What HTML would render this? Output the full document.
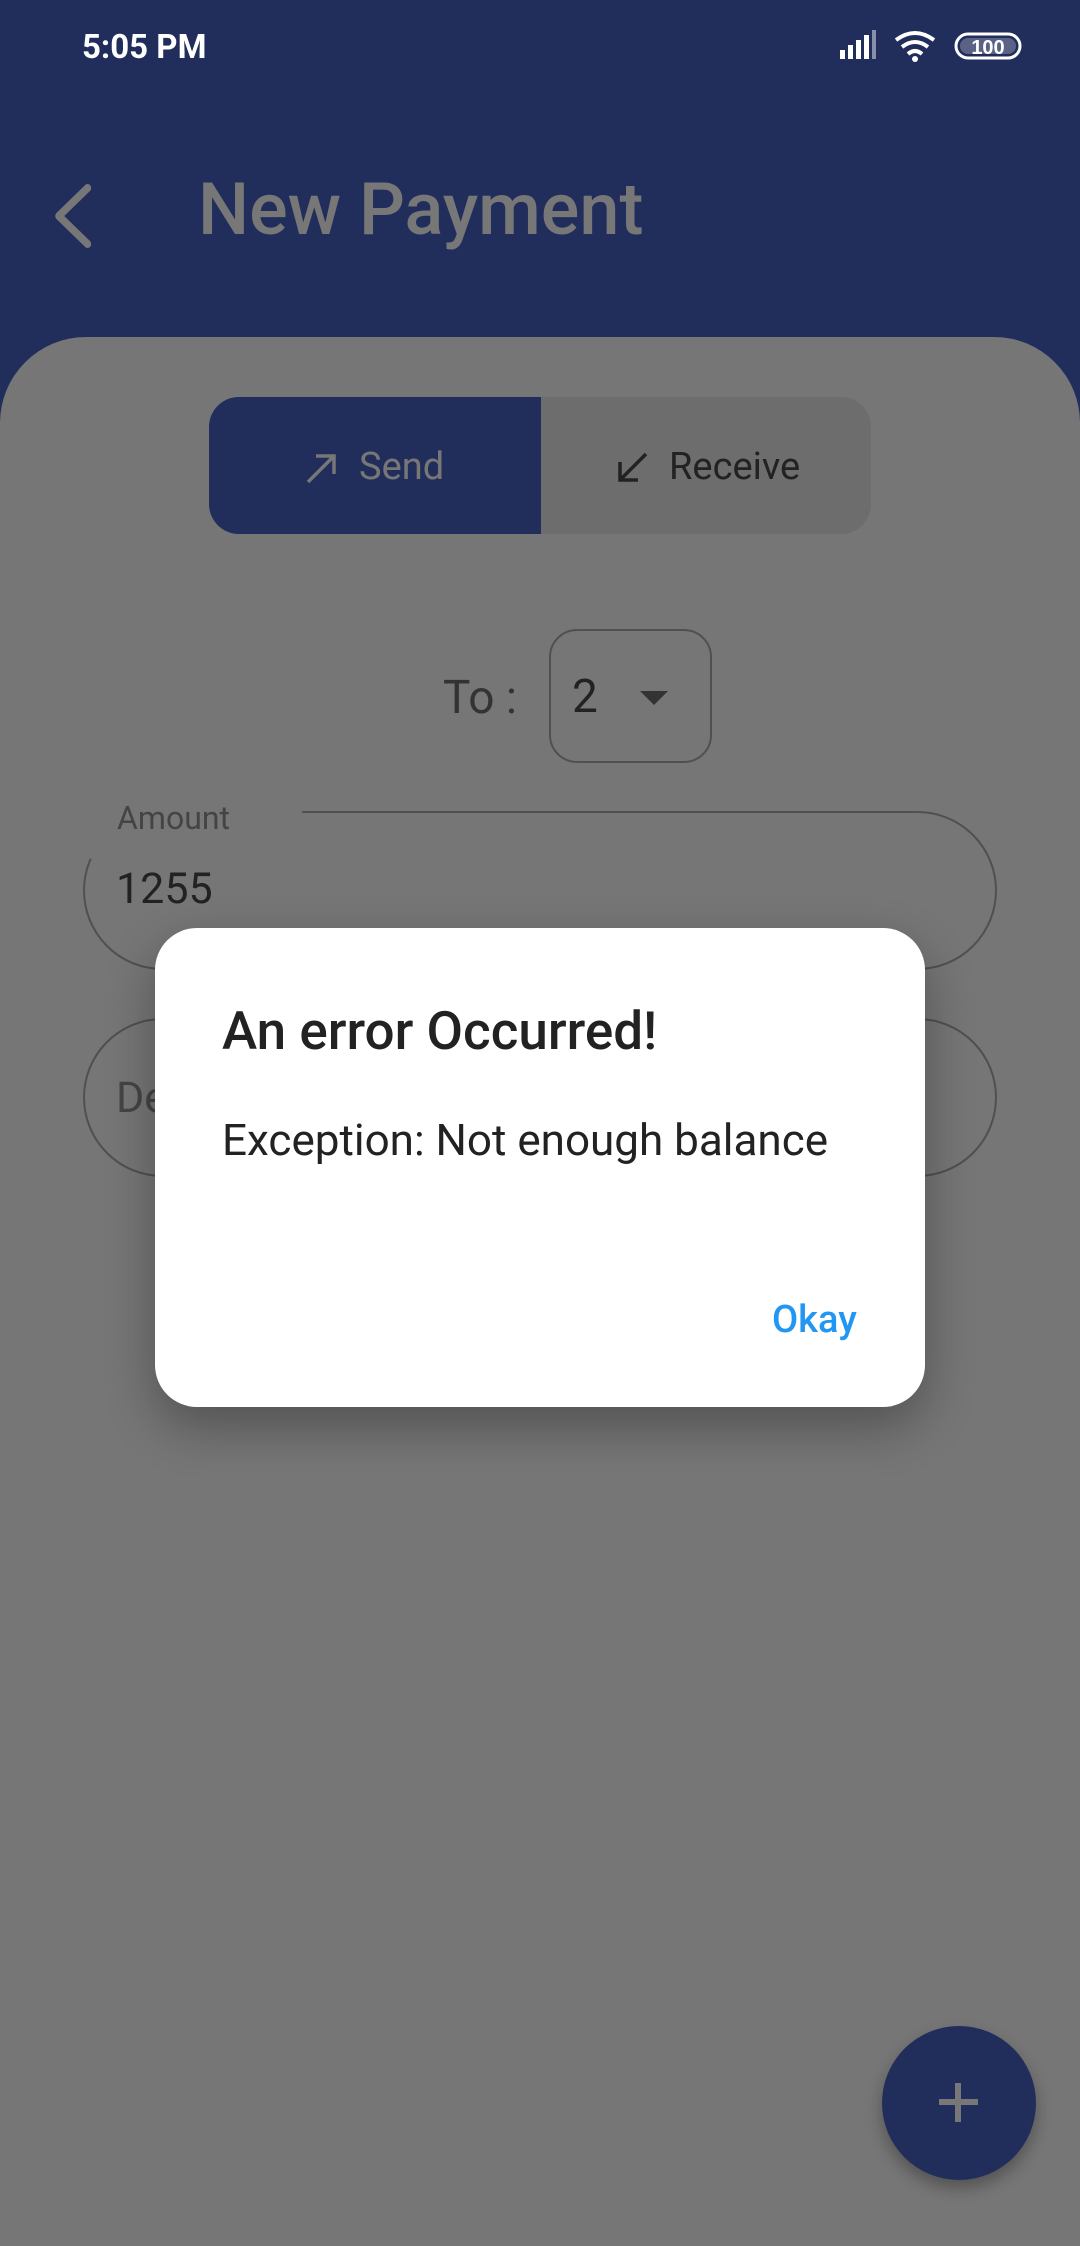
<!DOCTYPE html>
<html><head><meta charset="utf-8"><style>
*{margin:0;padding:0;box-sizing:border-box}
body{width:1080px;height:2246px;background:#767676;position:relative;overflow:hidden;font-family:"Roboto","Liberation Sans",sans-serif}
.hdr{position:absolute;left:0;top:0;width:1080px;height:420px;background:#212e5c}
.card{position:absolute;left:0;top:337px;width:1080px;height:1909px;background:#767676;border-radius:86px 86px 0 0}
.abs{position:absolute}
</style></head><body>
<div class="hdr"></div>
<div class="card"></div>
<div class="abs" style="left:82px;top:28px;font-size:33px;font-weight:bold;color:#fff">5:05 PM</div>
<svg class="abs" style="left:836px;top:28px" width="190" height="40" viewBox="0 0 190 40">
 <rect x="4" y="22" width="5" height="9" fill="#fff"/><rect x="12" y="17" width="5" height="14" fill="#fff"/><rect x="20" y="12" width="5" height="19" fill="#fff"/><rect x="28" y="7" width="5" height="24" fill="#fff"/><rect x="36" y="2" width="4" height="29" fill="#8890a8"/>
 <path d="M60 12 Q79 -2 98 12" stroke="#fff" stroke-width="4" fill="none"/><path d="M66 19 Q79 9 92 19" stroke="#fff" stroke-width="4" fill="none"/><path d="M72 26 Q79 20 86 26" stroke="#fff" stroke-width="4" fill="none"/><circle cx="79" cy="31" r="3" fill="#fff"/>
 <rect x="120" y="6" width="64" height="24" rx="12" fill="none" stroke="#fff" stroke-width="3"/><rect x="124" y="10" width="56" height="16" rx="8" fill="#5a6385"/>
 <text x="152" y="26" font-size="20" font-weight="bold" fill="#fff" text-anchor="middle" font-family="Liberation Sans">100</text>
</svg>
<svg class="abs" style="left:50px;top:180px" width="60" height="72"><path d="M44 8 L12 36 L44 64" stroke="#777" stroke-width="8" fill="none" stroke-linecap="round" stroke-linejoin="round" transform="translate(-2,0) scale(0.9,1)"/></svg>
<div class="abs" style="left:198px;top:174px;font-size:72px;font-weight:500;color:#777;line-height:1">New Payment</div>
<div class="abs" style="left:209px;top:397px;width:662px;height:137px;border-radius:30px;background:#6d6d6d;overflow:hidden">
 <div class="abs" style="left:0;top:0;width:332px;height:137px;background:#212e5c"></div>
</div>
<svg class="abs" style="left:302px;top:448px" width="40" height="40"><path d="M6 34 L32 8 M14 8 H32 V26" stroke="#777" stroke-width="3.5" fill="none"/></svg>
<div class="abs" style="left:359px;top:445px;font-size:38px;color:#777">Send</div>
<svg class="abs" style="left:612px;top:448px" width="40" height="40"><path d="M34 6 L8 32 M8 14 V32 H26" stroke="#222" stroke-width="3.5" fill="none"/></svg>
<div class="abs" style="left:669px;top:445px;font-size:38px;color:#222">Receive</div>
<div class="abs" style="left:443px;top:671px;font-size:46px;color:#333">To :</div>
<div class="abs" style="left:549px;top:629px;width:163px;height:134px;border:2px solid #505050;border-radius:28px"></div>
<div class="abs" style="left:572px;top:670px;font-size:46px;color:#222">2</div>
<svg class="abs" style="left:638px;top:688px" width="32" height="20"><path d="M2 3 H30 L16 17Z" fill="#333"/></svg>
<div class="abs" style="left:83px;top:811px;width:914px;height:159px;border:2px solid #505050;border-radius:80px;clip-path:polygon(0 30%,22% 30%,24% 0,100% 0,100% 100%,0 100%)"></div>
<div class="abs" style="left:117px;top:799px;font-size:32px;color:#444">Amount</div>
<div class="abs" style="left:116px;top:864px;font-size:43px;color:#222">1255</div>
<div class="abs" style="left:83px;top:1018px;width:914px;height:159px;border:2px solid #505050;border-radius:80px"></div>
<div class="abs" style="left:116px;top:1073px;font-size:43px;color:#444">Description</div>
<div class="abs" style="left:155px;top:928px;width:770px;height:479px;background:#fff;border-radius:42px;box-shadow:0 20px 50px rgba(0,0,0,.3)">
 <div class="abs" style="left:67px;top:72px;font-size:53px;font-weight:500;color:#222">An error Occurred!</div>
 <div class="abs" style="left:67px;top:186px;font-size:44px;color:#222">Exception: Not enough balance</div>
 <div class="abs" style="left:617px;top:370px;font-size:38px;font-weight:500;color:#2196f3">Okay</div>
</div>
<div class="abs" style="left:882px;top:2026px;width:154px;height:154px;border-radius:50%;background:#212e5c;box-shadow:0 8px 16px rgba(0,0,0,.3)"></div>
<div class="abs" style="left:939px;top:2099px;width:39px;height:6px;background:#777"></div>
<div class="abs" style="left:955px;top:2083px;width:6px;height:39px;background:#777"></div>
</body></html>
